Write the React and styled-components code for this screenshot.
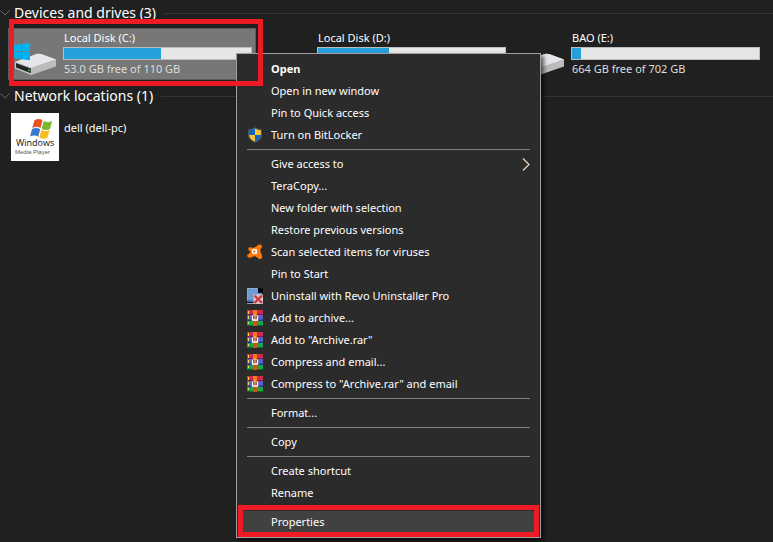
import React from 'react';
import styled, { createGlobalStyle } from 'styled-components';

const drives = [
  { name: 'Local Disk (C:)', used: 52, free: '53.0 GB free of 110 GB', system: true, selected: true },
  { name: 'Local Disk (D:)', used: 38, free: '' },
  { name: 'BAO (E:)', used: 5, free: '664 GB free of 702 GB' },
];

const ShieldIcon = () => (
  <svg width="16" height="16" viewBox="0 0 16 16" aria-hidden="true">
    <path d="M8 .3C6 1.7 3.500 2.300 1.200 2.400V7.500c0 4 3 6.700 6.800 8.200 3.800-1.500 6.800-4.200 6.800-8.200V2.400C12.500 2.300 10 1.700 8 .3z" fill="#55606b" />
    <path d="M8 1.500C6.300 2.600 4.300 3.200 2.200 3.300V8H8z" fill="#1068c4" />
    <path d="M8 1.500c1.700 1.100 3.700 1.700 5.800 1.800V8H8z" fill="#fdc630" />
    <path d="M2.200 8c.3 3 2.600 5.200 5.800 6.600V8z" fill="#fdc630" />
    <path d="M13.800 8c-.3 3-2.600 5.200-5.800 6.600V8z" fill="#1068c4" />
  </svg>
);

const AvastIcon = () => (
  <svg width="16" height="16" viewBox="0 0 16 16" aria-hidden="true">
    <path
      d="M10.800 1.200C12 .2 14.200.2 14.800 1.800c.4 1.200-.5 2.200-1.100 3.200-.6 1.200-.5 2.200.1 3.600.5 1.200 1.400 2.600 1.300 4.300-.1 1.800-1.800 2.400-3.200 1.800-1.400-.6-2.500-2.400-4.200-2.500-1.800-.1-3.200 1.500-5 1.600C1.200 13.900 0 12.700.2 11.300c.2-1.500 2.600-1.500 3.200-3.100.2-.6-.1-1-.6-1.300C2 6.400 1 5.500 1.400 4.400c.4-1.100 1.600-1.200 2.700-.9 1.200.3 2.300.3 3.400-.1 1.300-.5 2.200-1.300 3.300-2.200z"
      fill="#ff7a0a"
    />
    <circle cx="7.300" cy="7.400" r="1.900" fill="none" stroke="#fff" strokeWidth="1.300" />
    <path d="M9.300 5.200v4.600" fill="none" stroke="#fff" strokeWidth="1.300" />
  </svg>
);

const RevoIcon = () => (
  <svg width="16" height="16" viewBox="0 0 16 16" aria-hidden="true">
    <path d="M0 0h16v16H0z" fill="#05070b" />
    <path d="M0 0h11v5h4v8H0z" fill="#6f9bd4" />
    <path d="M0 0h11v1H1v12H0z" fill="#86abdc" />
    <path d="M0 12h7v2H0z" fill="#4c6ea4" />
    <path d="M0 15h7v1H0z" fill="#8ca8cc" />
    <path d="M6.500 6.500h9.500V16H6.500z" fill="#d8c8cc" />
    <path d="M7.500 7.500l7.500 7.500M15 7.500L7.500 15" stroke="#cc3a40" strokeWidth="2.400" />
  </svg>
);

const RarIcon = () => (
  <svg width="16" height="16" viewBox="0 0 16 16" aria-hidden="true">
    <path d="M0 0h16v5H0z" fill="#d02850" />
    <path d="M0 4h16v1H0z" fill="#8c1738" />
    <path d="M0 5h16v6H0z" fill="#5660c8" />
    <path d="M0 9.500h16V11H0z" fill="#343a8a" />
    <path d="M0 11h16v5H0z" fill="#1fa348" />
    <path d="M0 15h16v1H0z" fill="#0e6a2c" />
    <path d="M1 1h1v3H1zM1 6h1v3H1zM1 12h1v2H1z" fill="#f4d750" />
    <path d="M6 0h4v16H6z" fill="#ee7a1c" />
    <path d="M6 11h4v5H6z" fill="#c9560f" />
    <path d="M6 6h4v4H6z" fill="#8a3f20" />
    <path d="M5.500 5.500V10h5V5.500" fill="none" stroke="#fff" strokeWidth="1.300" />
    <path d="M7.500 4h1v5h-1z" fill="#f6c9a0" />
  </svg>
);

const menuGroups = [
  [
    { label: 'Open', bold: true },
    { label: 'Open in new window' },
    { label: 'Pin to Quick access' },
    { label: 'Turn on BitLocker', Icon: ShieldIcon },
  ],
  [
    { label: 'Give access to', submenu: true },
    { label: 'TeraCopy...' },
    { label: 'New folder with selection' },
    { label: 'Restore previous versions' },
    { label: 'Scan selected items for viruses', Icon: AvastIcon },
    { label: 'Pin to Start' },
    { label: 'Uninstall with Revo Uninstaller Pro', Icon: RevoIcon },
    { label: 'Add to archive...', Icon: RarIcon },
    { label: 'Add to "Archive.rar"', Icon: RarIcon },
    { label: 'Compress and email...', Icon: RarIcon },
    { label: 'Compress to "Archive.rar" and email', Icon: RarIcon },
  ],
  [{ label: 'Format...' }],
  [{ label: 'Copy' }],
  [{ label: 'Create shortcut' }, { label: 'Rename' }],
  [{ label: 'Properties', active: true }],
];

const DriveIcon = ({ system }) => (
  <svg width="48" height="48" viewBox="0 0 48 48" aria-hidden="true">
    <path d="M4 32L25.500 24q3-.6 6 .5L45 29.500v7L21.500 44.500q-1.500.4-3 0L4 38.500z" fill="#b4b4b6" />
    <path d="M4 32L25.500 24q3-.6 6 .5L45 29.500 20.500 37.800z" fill="#e6e6ea" />
    <path d="M20.500 37.800L45 29.500v6.500L20.500 44.700z" fill="#bcbcbe" />
    <path d="M4 32l16.500 5.800v6.900L4 38.500z" fill="#c8c8ca" />
    <path d="M5 33l14.800 5.500v4.700L5 37.500z" fill="#252626" />
    <path d="M17 39.300l1.600.6v1.500l-1.600-.6z" fill="#3edc4a" />
    {system && (
      <path d="M3 15.200l7-1v7H3zM11 14l8-1v8.200h-8zM3 22h7v7l-7-1zM11 22h8v8.200l-8-1z" fill="#00b4f1" />
    )}
  </svg>
);

const MediaPlayerIcon = () => (
  <svg width="48" height="48" viewBox="0 0 48 48" role="img" aria-label="Windows Media Player">
    <path d="M0 0h48v48H0z" fill="#fff" />
    <path d="M23.500 7.300c3-1.800 5.500-1.700 8 0l-2 7.800c-2.600-1.700-5.300-1.700-8.300-.2z" fill="#e8501e" />
    <path d="M32.700 8c2.800 1.600 5.500 1.500 8.500 0L39 16c-2.900 1.400-5.500 1.300-8.300-.2z" fill="#7cb82f" />
    <path d="M21 16c2.900-1.400 5.600-1.400 8.200.2l-1.900 7.600c-2.600-1.700-5.300-1.600-8.200-.2z" fill="#3879cc" />
    <path d="M30.400 16.800c2.600 1.500 5.300 1.600 8.200.3L36.500 24.700c-2.900 1.400-5.500 1.300-8.100-.2z" fill="#f9bd20" />
    <text x="5" y="33" fontSize="9" fontFamily="Open Sans, sans-serif" fill="#111">Windows</text>
    <text x="4" y="41" fontSize="6" fontFamily="Liberation Sans, sans-serif" fill="#555">Media Player</text>
  </svg>
);

const GroupHeader = ({ title }) => (
  <Heading>
    <HeadingButton type="button" aria-expanded="true">
      <svg width="10" height="6" viewBox="0 0 10 6" aria-hidden="true">
        <path d="M.5.5L5 5 9.500.5" fill="none" stroke="#6a6a6a" />
      </svg>
      <Title>{title}</Title>
    </HeadingButton>
    <HeadingLine />
  </Heading>
);

const App = () => {
  return (
    <Page>
      <GlobalStyle />
      <section>
        <GroupHeader title="Devices and drives (3)" />
        <Tiles>
          {drives.map((drive) => (
            <Tile key={drive.name} $selected={drive.selected}>
              <DriveIcon system={drive.system} />
              <Details>
                <Name>{drive.name}</Name>
                <Usage role="meter" aria-label={drive.name} aria-valuenow={drive.used} aria-valuemin={0} aria-valuemax={100}>
                  <UsageFill style={{ width: `${drive.used}%` }} />
                </Usage>
                <FreeSpace>{drive.free}</FreeSpace>
              </Details>
              {drive.selected && <DriveMarker />}
            </Tile>
          ))}
        </Tiles>
      </section>
      <section>
        <GroupHeader title="Network locations (1)" />
        <Tiles>
          <Tile>
            <MediaPlayerIcon />
            <Details $plain>
              <Name>dell (dell-pc)</Name>
            </Details>
          </Tile>
        </Tiles>
      </section>

      <ContextMenu role="menu">
        {menuGroups.map((group, i) => (
          <React.Fragment key={group[0].label}>
            {i > 0 && <Separator />}
            {group.map(({ label, Icon, bold, submenu, active }) => (
              <MenuItem key={label} type="button" role="menuitem" $bold={bold} $active={active}>
                <IconSlot>{Icon && <Icon />}</IconSlot>
                <Label>{label}</Label>
                {submenu && (
                  <svg width="8" height="13" viewBox="0 0 8 13" aria-hidden="true">
                    <path d="M1 .5l6 6-6 6" fill="none" stroke="#f0d8c0" strokeWidth="1.200" />
                  </svg>
                )}
                {active && <ItemMarker />}
              </MenuItem>
            ))}
          </React.Fragment>
        ))}
      </ContextMenu>
    </Page>
  );
};

export default App;

const GlobalStyle = createGlobalStyle`
  * {
    box-sizing: border-box;
  }
  body {
    margin: 0;
    background: #202020;
    color: #fff;
    font-family: 'Noto Sans', 'Open Sans', sans-serif;
    font-size: 11px;
  }
  button {
    font: inherit;
    color: inherit;
    background: none;
    border: 0;
    padding: 0;
    text-align: left;
  }
`;

const Page = styled.main`
  position: relative;
  display: flex;
  flex-direction: column;
  gap: 4px;
  min-height: 100vh;
  padding-top: 1px;
  overflow: hidden;
`;

const Heading = styled.h2`
  display: flex;
  align-items: center;
  gap: 8px;
  height: 24px;
  margin: 0 0 3px;
  font-size: 14px;
  font-weight: 400;
`;

const HeadingButton = styled.button`
  display: flex;
  align-items: center;
  gap: 4px;
  white-space: nowrap;
`;

const Title = styled.span`
  padding-bottom: 2px;
`;

const HeadingLine = styled.span`
  flex: 1;
  height: 1px;
  background: #333;
`;

const Tiles = styled.div`
  display: grid;
  grid-template-columns: repeat(auto-fill, 248px);
  gap: 6px;
  padding-left: 8px;
`;

const Tile = styled.div`
  position: relative;
  display: flex;
  gap: 4px;
  height: 52px;
  padding: 1px 3px 1px 2px;
  border: 1px solid ${(props) => (props.$selected ? '#5c5c5c' : 'transparent')};
  background: ${(props) => (props.$selected ? '#777' : 'transparent')};
`;

const Details = styled.div`
  flex: 1;
  padding-top: ${(props) => (props.$plain ? '6px' : '0')};
  margin-top: ${(props) => (props.$plain ? '0' : '-1px')};
`;

const Name = styled.div`
  height: 18px;
  padding-left: 1px;
  line-height: 18px;
`;

const Usage = styled.div`
  height: 13px;
  border: 1px solid #bcbcbc;
  background: #e6e6e6;
`;

const UsageFill = styled.div`
  height: 100%;
  background: #26a0da;
`;

const FreeSpace = styled.div`
  height: 18px;
  padding-left: 1px;
  line-height: 18px;
  color: #dedede;
`;

/* red outlines drawn over the window */
const Marker = styled.span`
  position: absolute;
  border: 5px solid #ed1c24;
  pointer-events: none;
`;

const DriveMarker = styled(Marker)`
  top: -10px;
  right: -8px;
  bottom: -7px;
  left: 0;
  z-index: 2;
`;

const ItemMarker = styled(Marker)`
  top: -6px;
  right: 0;
  bottom: -4px;
  left: 0;
`;

const ContextMenu = styled.div`
  position: absolute;
  top: 53px;
  left: 236px;
  z-index: 1;
  width: 305px;
  padding: 4px 1px;
  border: 1px solid #a0a0a0;
  background: #2b2b2b;
  box-shadow: 3px 3px 4px rgba(0, 0, 0, 0.6);
`;

const MenuItem = styled.button`
  position: relative;
  display: flex;
  align-items: center;
  gap: 8px;
  width: 100%;
  height: 22px;
  padding: 0 9px;
  font-weight: ${(props) => (props.$bold ? 700 : 400)};
  background: ${(props) => (props.$active ? '#414141' : 'transparent')};
  &:hover {
    background: #414141;
  }
`;

const IconSlot = styled.span`
  display: flex;
  width: 16px;
  height: 16px;
`;

const Label = styled.span`
  flex: 1;
  padding-bottom: 2px;
  white-space: nowrap;
`;

const Separator = styled.hr`
  height: 1px;
  margin: 3px 9px;
  border: 0;
  background: #808080;
`;
